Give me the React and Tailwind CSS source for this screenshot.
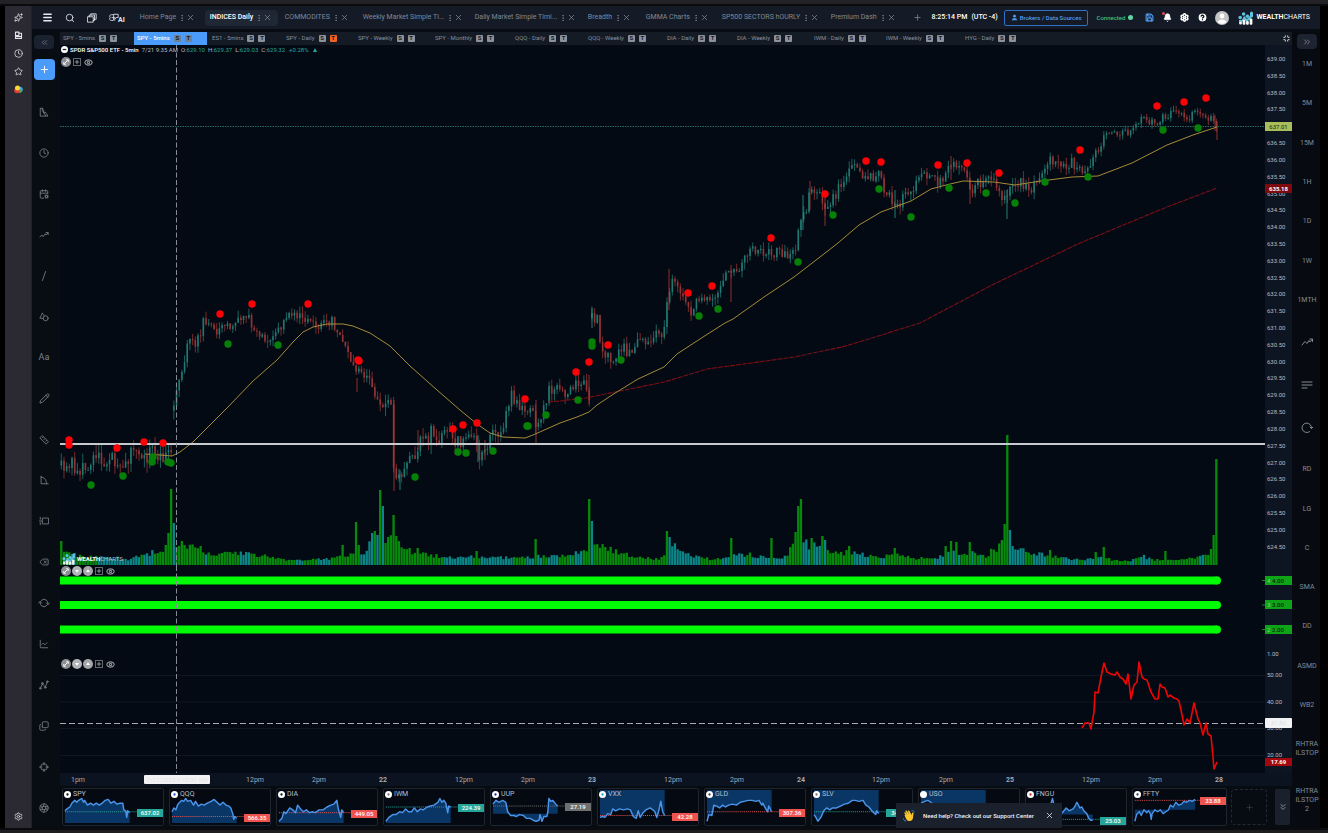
import {
  Aperture, Bell, CalendarCog, ChartLine, ChevronsDown, ChevronsLeft, ChevronsRight, CircleHelp, Clock, Copy,
  Delete, EllipsisVertical, Eye, Menu, Minimize, Pencil, Plus, RefreshCw, Save, Search, Settings,
  Sparkles, Star, User, X,
} from 'lucide-react';

const PAGE_TABS = [
  { name: 'Home Page', width: 'w-[70px]' },
  { name: 'INDICES Daily', width: 'w-[75px]', active: true },
  { name: 'COMMODITES', width: 'w-[78px]' },
  { name: 'Weekly Market Simple Ti...', width: 'w-[112px]' },
  { name: 'Daily Market Simple Timi...', width: 'w-[113px]' },
  { name: 'Breadth', width: 'w-[58px]' },
  { name: 'GMMA Charts', width: 'w-[76px]' },
  { name: 'SP500 SECTORS hOURLY', width: 'w-[109px]' },
  { name: 'Premium Dash', width: 'w-[87px]' },
];

const CHART_TABS = [
  { name: 'SPY - 5mins', width: 'w-[74px]' },
  { name: 'SPY - 5mins', width: 'w-[75px]', active: true },
  { name: 'ES1 - 5mins', width: 'w-[74px]' },
  { name: 'SPY - Daily', width: 'w-[72px]', alert: true },
  { name: 'SPY - Weekly', width: 'w-[77px]' },
  { name: 'SPY - Monthly', width: 'w-[80px]' },
  { name: 'QQQ - Daily', width: 'w-[73px]' },
  { name: 'QQQ - Weekly', width: 'w-[79px]' },
  { name: 'DIA - Daily', width: 'w-[70px]' },
  { name: 'DIA - Weekly', width: 'w-[77px]' },
  { name: 'IWM - Daily', width: 'w-[72px]' },
  { name: 'IWM - Weekly', width: 'w-[79px]' },
  { name: 'HYG - Daily', width: 'w-[75px]' },
];

// Close path of the 5 minute bars, as x / y pairs. One array for each run without a gap.
const PRICE_RUNS = [
  [[61, 468], [65, 475], [72, 457], [77, 477], [83, 463], [90, 468], [98, 450], [105, 463], [110, 455], [117, 465], [123, 460], [132, 453], [140, 457], [147, 458], [153, 448], [160, 457], [166, 458], [173, 443]],
  [[174, 398], [177, 390], [181, 380], [184, 360], [188, 345], [191, 335], [195, 343], [200, 340], [203, 320], [208, 328], [215, 332], [218, 333], [223, 328], [232, 325], [240, 315], [250, 320], [258, 330], [267, 340], [273, 332], [280, 328], [285, 318], [300, 315], [308, 320], [320, 324], [332, 322], [340, 330], [343, 345], [348, 347], [355, 375], [362, 373], [370, 383], [375, 403], [383, 405], [387, 393], [391, 407], [394, 477], [400, 473], [405, 462], [411, 463], [418, 443], [425, 445], [430, 433], [438, 438], [447, 435], [455, 440], [465, 438], [473, 433], [478, 453], [485, 447], [493, 433], [502, 432], [507, 413], [511, 393], [517, 403], [525, 415], [531, 408], [536, 423], [542, 415], [548, 392], [553, 390], [557, 382], [560, 387], [566, 393], [573, 387], [581, 380], [587, 390], [590, 400]],
  [[591, 313], [595, 323], [598, 320], [601, 347], [606, 358], [610, 357], [616, 360], [623, 343], [626, 357], [634, 350], [640, 338], [649, 347], [655, 335], [663, 342], [667, 307], [671, 287], [675, 280], [681, 293], [690, 312], [697, 300], [703, 298], [710, 298], [714, 305], [720, 288], [729, 270], [736, 277], [742, 262], [749, 250], [755, 253], [764, 250], [772, 255], [783, 252], [792, 258], [796, 247], [799, 227], [802, 207], [806, 213], [810, 190], [816, 193], [820, 190], [825, 213], [833, 200], [844, 178], [855, 168], [866, 180], [879, 175], [887, 195], [897, 208], [905, 197], [913, 197], [920, 168], [926, 177], [935, 182], [944, 182], [950, 167], [961, 168], [972, 188], [981, 182], [989, 175], [998, 187], [1007, 203], [1011, 187], [1022, 182], [1028, 192], [1037, 180], [1050, 162], [1061, 168], [1072, 162], [1080, 170], [1091, 163], [1098, 150], [1105, 133], [1119, 132], [1132, 133], [1140, 118], [1156, 123], [1165, 115], [1180, 113], [1187, 119], [1197, 112], [1206, 117], [1213, 118], [1218, 127]],
];

const LONG_WICKS = [
  [357, 378, 392], [394, 400, 491], [400, 470, 490], [418, 430, 450], [536, 400, 445], [478, 435, 462], [485, 440, 460],
  [589, 375, 404], [592, 308, 328], [669, 269, 310], [731, 265, 302], [803, 195, 230], [810, 181, 210], [825, 190, 226],
  [895, 190, 218], [951, 156, 180], [970, 180, 204], [1007, 190, 219], [1215, 115, 131], [1217, 121, 140],
];

const FAST_AVERAGE = '145,454 160,455 172,456 180,452 193,442 227,408 253,381 277,360 293,342 303,332 313,327 327,324 343,324 353,326 370,333 390,346 410,366 437,390 460,410 477,424 490,433 503,437 525,438 533,435 560,423 577,417 589,412 597,405 612,395 638,379 664,367 677,354 703,337 725,323 733,319 764,297 794,277 820,257 838,243 859,225 881,212 911,201 931,189 946,185 963,181 994,182 1015,185 1041,181 1072,177 1098,176 1132,163 1167,145 1193,135 1217,127';
const SLOW_AVERAGE = '548,402 560,401 586,398 625,390 664,382 707,369 751,363 794,357 842,347 872,338 907,327 920,323 994,284 1080,243 1167,207 1217,188';

const SELL_DOTS = [[69, 440], [69, 445], [117, 448], [144, 442], [163, 443], [220, 314], [252, 304], [308, 304], [358, 360], [359, 361], [453, 429], [463, 425], [477, 423], [525, 399], [576, 372], [589, 362], [608, 345], [688, 293], [712, 286], [771, 238], [825, 194], [866, 161], [881, 162], [938, 165], [967, 163], [999, 173], [1080, 150], [1157, 106], [1184, 102], [1206, 98]];
const BUY_DOTS = [[91, 485], [123, 476], [153, 457], [152, 462], [168, 462], [171, 463], [228, 344], [278, 345], [415, 477], [458, 452], [466, 453], [493, 451], [527, 426], [528, 426], [546, 415], [578, 400], [592, 342], [592, 346], [621, 360], [699, 316], [718, 309], [798, 262], [833, 215], [879, 189], [911, 217], [949, 188], [986, 193], [1015, 203], [1045, 182], [1088, 177], [1163, 130], [1198, 128]];

const VOLUME_ENVELOPE = [[61, 14], [70, 11], [90, 8], [120, 7], [130, 6], [150, 12], [165, 15], [177, 16], [190, 20], [200, 14], [215, 11], [237, 12], [260, 10], [278, 6], [300, 5], [330, 6], [340, 8], [365, 12], [372, 28], [389, 24], [397, 29], [405, 18], [418, 11], [430, 10], [450, 8], [477, 9], [490, 7], [510, 8], [545, 9], [560, 8], [575, 12], [588, 16], [597, 22], [610, 16], [625, 11], [640, 7], [660, 6], [673, 20], [685, 11], [700, 8], [715, 5], [729, 9], [750, 11], [765, 7], [785, 8], [794, 20], [804, 22], [818, 18], [830, 12], [848, 13], [870, 9], [880, 7], [895, 11], [915, 7], [935, 7], [950, 13], [970, 13], [985, 9], [1000, 20], [1014, 17], [1030, 12], [1050, 10], [1070, 6], [1085, 5], [1100, 9], [1112, 5], [1130, 4], [1141, 10], [1152, 5], [1175, 5], [1190, 7], [1205, 9], [1217, 13]];
const VOLUME_SPIKES = [[60, 24], [166, 20], [169, 32], [172, 76], [174, 42], [182, 24], [200, 19], [343, 20], [356, 43], [359, 20], [375, 34], [380, 75], [383, 59], [386, 22], [389, 28], [394, 50], [418, 17], [477, 14], [536, 26], [589, 66], [592, 44], [667, 34], [670, 28], [731, 27], [772, 27], [796, 33], [799, 59], [801, 66], [812, 27], [823, 29], [826, 25], [848, 19], [895, 17], [945, 19], [951, 24], [957, 23], [970, 23], [1002, 25], [1005, 41], [1007, 130], [1010, 35], [1050, 15], [1096, 13], [1104, 18], [1166, 14], [1212, 16], [1214, 30], [1217, 106]];
const LIGHT_SPIKES = [174, 383, 592, 670, 1010, 826];

const OSCILLATOR = '1082,728 1085,723 1089,723 1091,729 1094,712 1095,692 1098,693 1102,672 1104,663 1107,672 1111,674 1115,675 1117,672 1120,677 1123,679 1126,684 1128,674 1131,699 1134,685 1137,682 1139,662 1142,677 1144,679 1147,680 1151,692 1155,699 1158,699 1160,684 1162,687 1165,688 1168,697 1170,695 1174,698 1177,699 1179,701 1182,715 1184,725 1187,719 1190,723 1194,703 1198,719 1200,723 1203,735 1206,723 1208,734 1211,736 1213,757 1214,769 1217,762';

const TIMES = [
  [18, '1pm'], [177, '12pm'], [64, '2pm'], [64, '22'], [81, '12pm'], [64, '2pm'], [64, '23'], [81, '12pm'], [64, '2pm'],
  [64, '24'], [80, '12pm'], [65, '2pm'], [64, '25'], [81, '12pm'], [64, '2pm'], [64, '28'],
];

const TICKERS = [
  { name: 'SPY', price: '637.02', tone: 'up', line: 24, base: 36, mark: '#111', points: '2,23 4,21 7,19 9,15 12,12 14,14 16,12 19,10 21,14 22,12 25,17 28,15 31,17 34,15 37,17 40,15 43,12 46,11 49,15 52,13 55,16 58,15 61,15 62,22 64,23 65,30 66,23 68,25' },
  { name: 'QQQ', price: '566.35', tone: 'down', line: 29, base: 36, mark: '#1d4ed8', points: '2,24 4,20 6,22 8,16 12,12 14,13 16,10 18,13 21,12 24,17 26,13 29,18 32,16 35,17 38,15 42,13 45,11 48,14 51,17 54,14 57,17 60,18 62,20 64,26 65,32 66,29 68,31' },
  { name: 'DIA', price: '449.05', tone: 'down', line: 25, base: 36, mark: '#111', points: '2,34 5,31 7,24 9,26 13,20 16,22 19,25 21,17 24,21 27,24 30,22 33,25 36,24 39,25 43,22 47,22 51,19 55,17 58,16 61,12 62,18 63,23 65,30 66,22 68,25' },
  { name: 'IWM', price: '224.39', tone: 'up', line: 19, base: 36, mark: '#777', points: '2,34 5,30 9,27 12,27 16,24 19,25 22,21 25,24 28,24 31,20 34,24 37,21 40,22 44,19 47,18 51,17 55,14 57,10 59,14 61,12 63,15 65,25 66,18 68,19' },
  { name: 'UUP', price: '27.19', tone: 'flat', line: 18, base: 26, mark: '#1d1dc0', points: '2,16 5,12 8,14 12,12 15,14 17,24 20,28 23,28 26,29 29,27 33,28 36,31 40,31 43,33 46,34 49,33 50,27 52,34 54,29 57,29 58,24 59,10 61,13 63,12 66,16 68,18' },
  { name: 'VXX', price: '42.28', tone: 'down', line: 28, base: 1, mark: '#1aa5c8', points: '2,30 5,29 7,30 10,26 13,27 15,21 18,23 22,21 26,22 30,21 33,22 36,29 39,31 41,23 43,30 46,25 49,22 53,20 56,22 58,24 60,30 62,23 64,13 66,24 68,28' },
  { name: 'GLD', price: '307.36', tone: 'down', line: 24, base: 1, mark: '#444', points: '2,34 4,27 7,28 9,17 12,18 15,20 18,17 21,19 24,17 28,16 32,17 36,14 40,13 44,12 48,12 52,13 55,12 58,17 59,15 62,21 64,24 65,18 68,24' },
  { name: 'SLV', price: '34.64', tone: 'up', line: 24, base: 1, mark: '#777', points: '2,27 4,30 6,34 9,30 12,23 15,20 18,22 21,20 25,20 29,18 33,16 37,15 41,12 44,12 48,13 52,12 55,17 58,19 61,23 63,25 65,27 66,23 68,26' },
  { name: 'USO', tone: 'up', line: 27, base: 1, mark: '#fff', points: '2,15 6,13 9,12 12,14 15,17 20,20 26,18 32,21 38,23 44,20 50,24 56,26 62,25 68,27' },
  { name: 'FNGU', price: '25.03', tone: 'up', line: 32, base: 27, mark: '#c0262d', points: '2,30 8,24 14,26 20,21 25,17 27,10 29,19 33,22 37,25 41,20 44,23 48,21 50,18 52,14 55,20 57,19 59,23 62,26 64,31 66,33 68,33' },
  { name: 'FFTY', price: '33.88', tone: 'down', line: 12, base: 22, mark: '#345', points: '2,34 4,27 7,24 9,28 12,22 15,25 17,23 19,26 20,32 21,26 24,22 27,24 30,22 33,26 36,24 39,22 41,17 44,19 47,14 50,17 53,16 56,13 59,14 62,12 65,13 68,11' },
];

const TONES = {
  up: { tag: 'bg-[#26a69a]', stroke: '#26a69a' },
  down: { tag: 'bg-[#ef5350]', stroke: '#ef5350' },
  flat: { tag: 'bg-[#6f6f6f]', stroke: '#777777' },
};

const BAR_STEP = 2.68;

function makeRandom(seed) {
  let value = seed;
  return () => {
    value = (value * 16807) % 2147483647;
    return value / 2147483647;
  };
}

function valueAt(points, x) {
  for (let i = 1; i < points.length; i++) {
    if (x <= points[i][0]) {
      const [x0, y0] = points[i - 1];
      const [x1, y1] = points[i];
      return y0 + ((y1 - y0) * (x - x0)) / (x1 - x0);
    }
  }
  return points[points.length - 1][1];
}

function buildBars() {
  const random = makeRandom(4217);
  const bars = [];
  let last = null;
  for (let i = 0; i <= 431; i++) {
    const x = 61.3 + i * BAR_STEP;
    const runIndex = x < 173.5 ? 0 : x < 590.5 ? 1 : 2;
    const run = PRICE_RUNS[runIndex];
    const noise = x < 175 || (x > 385 && x < 500) ? 17 : x > 1100 ? 8 : 12;
    const close = valueAt(run, x) + (random() - 0.5) * noise;
    const open = last && last.runIndex === runIndex ? last.close : close + 5;
    bars.push({
      x,
      runIndex,
      open,
      close,
      high: Math.min(open, close) - random() * noise * 0.6,
      low: Math.max(open, close) + random() * noise * 0.6,
      volume: valueAt(VOLUME_ENVELOPE, x) * (0.75 + random() * 0.45),
      heavy: last && random() > 0.35 ? last.heavy : random() > 0.5,
    });
    last = bars[i];
  }
  VOLUME_SPIKES.forEach(([x, height]) => {
    const index = Math.max(0, Math.round((x - 61.3) / BAR_STEP));
    bars[index].volume = height;
    bars[index].heavy = !LIGHT_SPIKES.includes(x);
  });
  return bars;
}

const BARS = buildBars();

function LogoMark({ className }) {
  return (
    <svg viewBox="0 0 16 14" className={className} aria-hidden="true">
      <g fill="#5fc3e0">
        <circle cx="2.2" cy="6.6" r="1.8" />
        <circle cx="5.6" cy="3" r="1.8" />
        <circle cx="9.4" cy="5.2" r="1.8" />
        <rect x="12" y="0.5" width="3" height="6" rx="1.5" />
        <path d="M1 9h3l2-4 3 3 4-4v3l-4 4-3-3-2 3H1z" />
      </g>
      <g fill="#f4f6f8">
        <circle cx="2.5" cy="12" r="1.5" />
        <rect x="4.6" y="8.5" width="2.8" height="5.2" rx="1" />
        <rect x="8" y="10" width="2.8" height="3.7" rx="1" />
        <rect x="11.6" y="7.6" width="2.8" height="6.1" rx="1" />
      </g>
    </svg>
  );
}

function Glyph({ children, className = 'size-[10px]' }) {
  return (
    <svg viewBox="0 0 24 24" fill="none" stroke="currentColor" strokeWidth="2" strokeLinecap="round" strokeLinejoin="round" className={className} aria-hidden="true">
      {children}
    </svg>
  );
}

const TOOLS = [
  { label: 'Indicators', icon: <Glyph><path d="M3 21V3h5l3 5v6l4-2 6 9zM8 3v6l8 12" /></Glyph> },
  { label: 'History', icon: <Clock className="size-[10px]" /> },
  { label: 'Events', icon: <CalendarCog className="size-[10px]" /> },
  { label: 'Trend', icon: <Glyph><path d="M2 17l5-5 3 4 5-7 2 3 5-5M17 6h5v5" /></Glyph> },
  { label: 'Line', icon: <Glyph><path d="M8 23L16 1" /></Glyph> },
  { label: 'Shapes', icon: <Glyph><path d="M8 3L2 15h8M8 3l5 6" /><circle cx="16" cy="15" r="6" /></Glyph> },
  { label: 'Text', icon: <span className="text-[9px] leading-none">Aa</span> },
  { label: 'Draw', icon: <Pencil className="size-[11px]" /> },
  { label: 'Measure', icon: <Glyph><path d="M7 2L2 7l15 15 5-5zM10 5L8 7M14 9l-2 2M18 13l-2 2" /></Glyph> },
  { label: 'Angle', icon: <Glyph><path d="M5 3v18h17M5 5c8 0 13 7 13 16" /></Glyph> },
  { label: 'Range', icon: <Glyph><rect x="9" y="5" width="14" height="14" /><path d="M3 3v5M3 16v5M1 12h5" /></Glyph> },
  { label: 'Clear', icon: <Delete className="size-[10px]" /> },
  { label: 'Sync', icon: <RefreshCw className="size-[10px] rotate-45" /> },
  { label: 'Chart type', icon: <ChartLine className="size-[10px]" /> },
  { label: 'Pattern', icon: <Glyph><path d="M4 19l4-10 7 8 5-12" /><circle cx="3" cy="20" r="2" /><circle cx="8" cy="8" r="2" /><circle cx="15" cy="18" r="2" /><circle cx="20" cy="4" r="2" /></Glyph> },
  { label: 'Duplicate', icon: <Copy className="size-[10px] -rotate-90" /> },
  { label: 'Crosshair', icon: <Glyph><circle cx="12" cy="12" r="8" /><path d="M12 1v6M12 17v6M1 12h6M17 12h6" /></Glyph> },
  { label: 'Snapshot', icon: <Aperture className="size-[10px]" /> },
];

const SHORTCUTS = [
  { label: '1M', size: 'grow-39' },
  { label: '5M', size: 'grow-39' },
  { label: '15M', size: 'grow-39' },
  { label: '1H', size: 'grow-39' },
  { label: '1D', size: 'grow-39' },
  { label: '1W', size: 'grow-39' },
  { label: '1MTH', size: 'grow-39' },
  { label: 'Trend', size: 'grow-43', icon: <Glyph className="size-[12px]"><path d="M2 18l6-7 4 4 4-6 2 3 5-6M18 6h5v5" /></Glyph> },
  { label: 'List', size: 'grow-43', icon: <Glyph className="size-[12px]"><path d="M2 6h20M2 12h20M2 18h10" /></Glyph> },
  { label: 'Reload', size: 'grow-43', icon: <Glyph className="size-[12px]"><path d="M21 13a9.500 9.500 0 10-4 6.500M18 10l3 3 3-3" /></Glyph> },
  { label: 'RD', size: 'grow-39' },
  { label: 'LG', size: 'grow-39' },
  { label: 'C', size: 'grow-39' },
  { label: 'SMA', size: 'grow-39' },
  { label: 'DD', size: 'grow-39' },
  { label: 'ASMD', size: 'grow-39' },
  { label: 'WB2', size: 'grow-39' },
  { label: 'RHTRAILSTOP', lines: ['RHTRA', 'ILSTOP'], size: 'grow-48' },
  { label: 'RHTRAILSTOP 2', lines: ['RHTRA', 'ILSTOP', '2'], size: 'grow-54' },
];

function BrowserRail() {
  return (
    <nav aria-label="Browser" className="flex w-[27px] shrink-0 flex-col items-center justify-between border-r border-[#1c2130] bg-[#2b2a33] py-[7px] text-[#e4e4ea]">
      <div className="flex flex-col items-center gap-[9px]">
        <button aria-label="Assistant"><Sparkles className="size-[9px]" /></button>
        <button aria-label="Synced tabs">
          <Glyph className="size-[9px]"><path d="M4 3h9v9H4zM13 6h7v14H4v-5M4 15h16" strokeWidth="3" /></Glyph>
        </button>
        <button aria-label="History"><Clock className="size-[9px]" /></button>
        <button aria-label="Bookmarks"><Star className="size-[9px]" /></button>
        <button aria-label="Extension">
          <svg viewBox="0 0 18 18" className="size-[9px]">
            <circle cx="12" cy="9" r="5.5" fill="#3fa7e8" />
            <circle cx="11" cy="12" r="4" fill="#4caf50" />
            <circle cx="6" cy="11" r="5.5" fill="#e53935" />
            <circle cx="7" cy="6" r="5" fill="#fdd835" />
          </svg>
        </button>
      </div>
      <button aria-label="Sidebar settings"><Settings className="size-[9px]" /></button>
    </nav>
  );
}

function Header() {
  return (
    <header className="flex h-[23px] shrink-0 items-center bg-[#141b26] pl-[10px] pr-[10px] text-[7px] text-[#7f8a9a]">
      <div className="flex shrink-0 items-center gap-3 text-[#e6eaf0]">
        <button aria-label="Menu"><Menu className="size-[11px]" strokeWidth={3} /></button>
        <button aria-label="Search"><Search className="size-[10px]" /></button>
        <button aria-label="Layouts">
          <Glyph className="size-[10px]"><path d="M2 9h13v13H2zM5 9V5h13v13h-3M9 5V2h13v13h-4" /></Glyph>
        </button>
        <button aria-label="AI" className="flex items-end">
          <Glyph className="size-[10px]"><path d="M9 4H6a4 4 0 00-3 7 4 4 0 003 7h3M12 3h10v8h-5l-3 4v-4h-2zM7 11h4v6h3" /></Glyph>
          <span className="-mb-px -ml-px text-[7px] font-bold leading-[7px]">AI</span>
        </button>
      </div>

      <div className="ml-[10px] flex items-center">
        {PAGE_TABS.map((tab) => (
          <div key={tab.name} className={`${tab.width} shrink-0`}>
            <div className={`flex h-4 w-fit items-center rounded-sm pl-[5px] pr-[6px] ${tab.active ? 'bg-[#1f2735]' : ''}`}>
              <a href="#" className={`whitespace-nowrap ${tab.active ? 'font-medium text-white' : ''}`}>{tab.name}</a>
              <button aria-label={`${tab.name} options`} className="ml-[2px]"><EllipsisVertical className="size-[8px]" /></button>
              <button aria-label={`Close ${tab.name}`}><X className="size-[9px]" /></button>
            </div>
          </div>
        ))}
        <button aria-label="Add tab" className="shrink-0"><Plus className="size-[9px]" /></button>
      </div>

      <div className="ml-auto flex shrink-0 items-center whitespace-nowrap">
        <span className="font-medium text-white">8:25:14 PM</span>
        <span className="ml-1 font-medium text-white">(UTC -4)</span>
        <button className="ml-[6px] flex h-4 items-center gap-[2px] rounded-[2px] border border-[#2f6fc4] px-[6px] text-[6px] font-medium text-[#4f9cf5]">
          <User className="size-[7px]" fill="currentColor" />
          Brokers / Data Sources
        </button>
        <span className="ml-2 text-[6px] font-medium text-[#3fbf7f]">Connected</span>
        <span className="ml-[3px] size-[5px] rounded-full bg-[#5fd8a0]" />
        <button aria-label="Save" className="ml-[12px] text-[#4f9cf5]"><Save className="size-[9px]" strokeWidth={3} /></button>
        <button aria-label="Notifications" className="relative ml-[9px] text-white">
          <Bell className="size-[9px]" fill="currentColor" />
          <span className="absolute -left-px -top-px size-[3px] rounded-full bg-[#e5484d]" />
        </button>
        <button aria-label="Settings" className="ml-[8px] text-white"><Settings className="size-[9px]" strokeWidth={4} /></button>
        <button aria-label="Help" className="ml-[8px]"><CircleHelp className="size-[11px] text-[#141b26]" fill="white" strokeWidth={3} /></button>
        <button aria-label="Account" className="ml-[7px]">
          <svg viewBox="0 0 14 14" className="size-[14px]">
            <circle cx="7" cy="7" r="7" fill="#c4c4c4" />
            <circle cx="7" cy="5" r="2.4" fill="#fff" />
            <path d="M2.6 11a4.6 3.6 0 018.8 0 6 6 0 01-8.8 0z" fill="#fff" />
          </svg>
        </button>
        <a href="#" className="ml-[9px] flex items-center gap-[2px] text-[7px] leading-none text-white">
          <LogoMark className="h-[14px] w-4" />
          <span><b>WEALTH</b>CHARTS</span>
        </a>
      </div>
    </header>
  );
}

function ToolRail() {
  return (
    <aside className="flex w-7 shrink-0 flex-col bg-[#080c13] pl-[2px] text-[#7c828c]">
      <button aria-label="Collapse tools" className="mt-[3px] flex h-[14px] w-5 items-center justify-center rounded-sm bg-[#1a2230]">
        <ChevronsLeft className="size-[9px]" />
      </button>
      <button aria-label="Add chart" className="mb-3 mt-[10px] flex h-[21px] w-[21px] items-center justify-center rounded-sm bg-[#4a9bfa] text-white">
        <Plus className="size-[11px]" />
      </button>
      {TOOLS.map((tool) => (
        <button key={tool.label} aria-label={tool.label} className="flex w-5 flex-1 items-center justify-center">
          {tool.icon}
        </button>
      ))}
    </aside>
  );
}

function ShortcutRail() {
  return (
    <aside className="flex w-7 shrink-0 flex-col items-center bg-[#070b11] pl-[2px] text-[7px] leading-[9px] text-[#858a93]">
      <button aria-label="Expand panel" className="-mb-1 mt-[2px] flex h-[15px] w-5 shrink-0 items-center justify-center rounded-sm bg-[#1d2330]">
        <ChevronsRight className="size-[10px]" />
      </button>
      {SHORTCUTS.map((item) => (
        <button key={item.label} aria-label={item.label} className={`${item.size} flex basis-0 flex-col items-center justify-center`}>
          {item.icon || (item.lines || [item.label]).map((line) => <span key={line}>{line}</span>)}
        </button>
      ))}
    </aside>
  );
}

function ChartTabs() {
  return (
    <div className="flex h-[13px] shrink-0 items-center bg-[#141b25] text-[6px] leading-none text-[#858f9d]">
      {CHART_TABS.map((tab, index) => (
        <div key={index} className={`${tab.width} h-full shrink-0`}>
          <button className={`flex h-full w-[73px] items-center whitespace-nowrap pb-px pl-[3px] ${tab.active ? 'bg-[#4a9bfa] font-medium text-white' : ''}`}>
            {tab.name}
            <span className={`ml-1 flex size-[7px] items-center justify-center rounded-[1px] font-bold text-[#141b25] ${tab.active ? 'bg-[#6d8299]' : 'bg-[#8c929c]'}`}>S</span>
            <span className={`ml-1 flex size-[7px] items-center justify-center rounded-[1px] font-bold text-[#141b25] ${tab.alert ? 'bg-[#f26322]' : tab.active ? 'bg-[#6d8299]' : 'bg-[#8c929c]'}`}>T</span>
          </button>
        </div>
      ))}
      <button aria-label="Minimize" className="ml-auto mr-[2px] text-white"><Minimize className="size-[7px]" strokeWidth={3} /></button>
    </div>
  );
}

function PaneControls({ movable = false, className }) {
  return (
    <div className={`absolute left-[1px] flex items-center text-[#8d8f93] ${className}`}>
      <button aria-label="Expand pane">
        <svg viewBox="0 0 10 10" className="size-[10px]"><circle cx="5" cy="5" r="5" fill="#8d8f93" /><path d="M5.200 2.800h2v2M4.800 7.200h-2v-2M3.500 6.500l3-3" stroke="#fff" fill="none" /></svg>
      </button>
      {movable && (
        <>
          <button aria-label="Move down" className="ml-px">
            <svg viewBox="0 0 10 10" className="size-[10px]"><circle cx="5" cy="5" r="5" fill="#b4b5b8" /><path d="M3 4h4L5 6.800z" fill="#fff" /></svg>
          </button>
          <button aria-label="Move up" className="ml-px">
            <svg viewBox="0 0 10 10" className="size-[10px]"><circle cx="5" cy="5" r="5" fill="#a5a6a9" /><path d="M3 6h4L5 3.200z" fill="#fff" /></svg>
          </button>
        </>
      )}
      <button aria-label="Add" className="ml-[2px] flex size-2 items-center justify-center border border-[#64676d]"><Plus className="size-[6px]" strokeWidth={4} /></button>
      <button aria-label="Show or hide" className="ml-[3px]"><Eye className="size-[9px]" strokeWidth={3} /></button>
    </div>
  );
}

function PriceChart() {
  return (
    <svg viewBox="60 45 1205 521" preserveAspectRatio="none" className="absolute inset-0 h-full w-full" role="img" aria-label="SPY 5 minute price and volume">
      {BARS.map((bar) => (
        <rect key={bar.x} x={bar.x - 1.2} y={565 - bar.volume} width="2.3" height={bar.volume} fill={bar.heavy ? '#078a0b' : '#0b8587'} />
      ))}
      {BARS.map((bar) => {
        const color = bar.close <= bar.open ? '#2a9d91' : '#c2413f';
        const top = Math.min(bar.open, bar.close);
        return (
          <g key={bar.x} opacity="0.75">
            <line x1={bar.x} x2={bar.x} y1={bar.high} y2={bar.low} stroke={color} strokeWidth="0.8" />
            <rect x={bar.x - 0.8} y={top} width="1.6" height={Math.max(1, Math.abs(bar.open - bar.close))} fill={color} />
          </g>
        );
      })}
      {LONG_WICKS.map(([x, top, bottom], index) => (
        <line key={x} x1={x} x2={x} y1={top} y2={bottom} stroke={index % 3 === 2 ? '#2a9d91' : '#b03a3a'} strokeWidth="0.8" />
      ))}
      <line x1="60" x2="1265" y1="126.500" y2="126.500" stroke="#2b6863" strokeDasharray="1.500 1" />
      <polyline points={SLOW_AVERAGE} fill="none" stroke="#7a1018" strokeWidth="1.100" strokeDasharray="5 1" />
      <polyline points={FAST_AVERAGE} fill="none" stroke="#a58a38" strokeWidth="1" />
      <line x1="60" x2="1265" y1="444" y2="444" stroke="#c6c9cd" strokeWidth="2" />
      <line x1="176.500" x2="176.500" y1="45" y2="566" stroke="#868b93" strokeDasharray="5 2.500" />
      {BUY_DOTS.map(([x, y]) => <circle key={`${x}-${y}`} cx={x} cy={y} r="3.700" fill="#078007" />)}
      {SELL_DOTS.map(([x, y]) => <circle key={`${x}-${y}`} cx={x} cy={y} r="3.700" fill="#fb0207" />)}
    </svg>
  );
}

function PricePane() {
  const prices = Array.from({ length: 30 }, (_, i) => (639 - i * 0.5).toFixed(2));
  return (
    <section className="flex min-h-0 grow-521 basis-0">
      <div className="relative min-w-0 flex-1">
        <PriceChart />
        <div className="absolute left-[1px] top-0 flex items-center whitespace-nowrap text-[6px] leading-[9px] text-[#b4bac2]">
          <svg viewBox="0 0 8 8" className="mr-[2px] size-[7px]"><circle cx="4" cy="4" r="4" fill="#fff" /><path d="M2 4h4" stroke="#222" strokeWidth="1.500" /></svg>
          <span className="font-medium text-white">SPDR S&amp;P500 ETF - 5min</span>
          <span className="ml-[3px]">7/21 9:35 AM</span>
          <span className="ml-[3px]">O:<span className="text-[#26a69a]">629.10</span></span>
          <span className="ml-[3px]">H:<span className="text-[#26a69a]">629.37</span></span>
          <span className="ml-[3px]">L:<span className="text-[#26a69a]">629.03</span></span>
          <span className="ml-[3px]">C:<span className="text-[#26a69a]">629.32</span></span>
          <span className="ml-1 text-[#26a69a]">+0.28%</span>
          <svg viewBox="0 0 6 6" className="ml-1 size-[4px]"><path d="M0 6h6L3 0z" fill="#26a69a" /></svg>
        </div>
        <PaneControls className="top-3" />
        <div className="absolute bottom-[1px] left-[2px] flex items-center gap-px text-[6px] leading-none text-white">
          <LogoMark className="h-3 w-[14px]" />
          <span><b>WEALTH</b><span className="text-[#b9bec5]">CHARTS</span></span>
        </div>
      </div>
      <div className="relative flex w-[27px] flex-col justify-between bg-[#0d1522] pb-[15px] pl-[2px] pt-[9px] text-[6px] leading-[9px] text-[#b4bcc8]">
        {prices.map((price) => <span key={price}>{price}</span>)}
        <span className="absolute inset-x-0 top-[77px] h-[9px] bg-[#a9bd5a] text-center text-[#20260c]">637.01</span>
        <span className="absolute inset-x-0 top-[139px] h-[9px] bg-[#7d0a0f] text-center font-bold text-white">635.18</span>
      </div>
    </section>
  );
}

function TrendPane() {
  return (
    <section className="flex min-h-0 grow-93 basis-0">
      <div className="relative min-w-0 flex-1">
        <svg viewBox="60 566 1205 93" preserveAspectRatio="none" className="absolute inset-0 h-full w-full" role="img" aria-label="Trend bars">
          {[580.5, 605, 629.5].map((y) => (
            <g key={y}>
              <line x1="60" x2="1217" y1={y} y2={y} stroke="#00fb04" strokeWidth="8" />
              <circle cx="1217" cy={y} r="4" fill="#00fb04" />
              <line x1="1262" x2="1265" y1={y} y2={y} stroke="#0c8f16" />
            </g>
          ))}
          <line x1="176.500" x2="176.500" y1="566" y2="659" stroke="#868b93" strokeDasharray="5 2.500" />
        </svg>
        <PaneControls movable className="top-0" />
      </div>
      <div className="flex w-[27px] flex-col justify-between bg-[#0d1522] pb-px pt-[10px] text-[6px] leading-[9px] text-[#b4bcc8]">
        {['4.00', '3.00', '2.00'].map((value) => (
          <span key={value} className="flex bg-[#0fa317] pl-[2px]">
            <span className="w-[5px] overflow-hidden text-[#7fd683]">{value[0]}</span>
            <span className="font-medium text-[#062a08]">{value}</span>
          </span>
        ))}
        <span className="pl-[2px]">1.00</span>
      </div>
    </section>
  );
}

function OscillatorPane() {
  return (
    <section className="flex min-h-0 grow-114 basis-0">
      <div className="relative min-w-0 flex-1">
        <svg viewBox="60 659 1205 114" preserveAspectRatio="none" className="absolute inset-0 h-full w-full" role="img" aria-label="Oscillator">
          {[675.5, 702, 728.5, 755.5].map((y) => <line key={y} x1="60" x2="1265" y1={y} y2={y} stroke="#0f1620" />)}
          <line x1="60" x2="1265" y1="723.500" y2="723.500" stroke="#a7abb2" strokeDasharray="6 3" />
          <line x1="176.500" x2="176.500" y1="659" y2="773" stroke="#868b93" strokeDasharray="5 2.500" />
          <polyline points={OSCILLATOR} fill="none" stroke="#f00505" strokeWidth="1.600" strokeLinejoin="round" />
        </svg>
        <PaneControls movable className="top-0" />
      </div>
      <div className="relative flex w-[27px] flex-col justify-between bg-[#0d1522] pb-[14px] pl-[2px] pt-[11px] text-[6px] leading-[9px] text-[#b4bcc8]">
        {['50.00', '40.00', '30.00', '20.00'].map((value) => <span key={value}>{value}</span>)}
        <span className="absolute inset-x-0 top-[59px] h-[10px] rounded-[1px] bg-[#f2f2f4] text-center leading-[10px] text-[#dcdce0]">31.82</span>
        <span className="absolute inset-x-0 top-[99px] h-2 bg-[#a3080e] text-center font-bold leading-2 text-white">17.69</span>
      </div>
    </section>
  );
}

function TimeAxis() {
  return (
    <div className="relative flex h-[13px] shrink-0 items-center bg-[#0c1320] pr-[73px] pt-px text-[7px] leading-none text-[#a2aab5]">
      {TIMES.map(([gap, label], index) => (
        <div key={index} className="flex basis-0 justify-end" style={{ flexGrow: gap }}>
          <span className={`flex w-0 justify-center whitespace-nowrap ${label.length === 2 ? 'font-bold' : ''}`}>{label}</span>
        </div>
      ))}
      <span className="absolute left-[84px] top-[2px] h-[9px] w-[66px] whitespace-nowrap rounded-[1px] bg-[#f2f2f4] text-center text-[6px] leading-[9px] text-[#e3e3e6]">7/21/2025 9:35:00 AM</span>
    </div>
  );
}

function TickerCard({ ticker }) {
  const tone = TONES[ticker.tone];
  return (
    <a href="#" className="relative block h-[38px] w-[102px] shrink-0 rounded-[2px] border border-[#1e252f] bg-[#050a12] text-[7px] last:shrink">
      <svg viewBox="0 0 102 38" preserveAspectRatio="none" className="absolute inset-0 h-full w-full" aria-hidden="true">
        <polygon points={`2,${ticker.base} ${ticker.points} 68,${ticker.base}`} fill="#0a3665" />
        <line x1="2" x2="76" y1={ticker.line} y2={ticker.line} stroke={tone.stroke} strokeDasharray="1 1" />
        <polyline points={ticker.points} fill="none" stroke="#4a94ea" strokeWidth="1.500" strokeLinejoin="round" />
      </svg>
      <span className="relative flex items-center gap-[2px] pl-px pt-px leading-[9px] text-[#b6bdc7]">
        <svg viewBox="0 0 8 8" className="size-[7px]"><circle cx="4" cy="4" r="4" fill="#fff" /><circle cx="4" cy="4" r="1.300" fill={ticker.mark} /></svg>
        {ticker.name}
      </span>
      {ticker.price && (
        <span className={`absolute right-0 flex h-2 w-[26px] items-center justify-center text-[6px] font-medium leading-none text-white ${tone.tag}`} style={{ top: ticker.line - 4 }}>
          {ticker.price}
        </span>
      )}
    </a>
  );
}

function SupportToast() {
  return (
    <div role="status" className="absolute bottom-0 right-[230px] flex h-[25px] w-[166px] items-center bg-[#1b212c] pl-[7px] text-[6px] font-medium text-[#f0f2f5]">
      <svg viewBox="0 0 24 24" className="size-3 shrink-0" aria-hidden="true">
        <path d="M5 10L3 7c-1-2 1-3 2-2l4 5-4-7c-1-2 2-3 3-1l4 6-2-5c-1-2 2-3 3-1l4 8 1-4c1-2 4-1 3 1l-1 8c0 5-4 8-8 7-4 0-6-4-9-12z" fill="#fcc62d" />
        <path d="M1 17c0 3 2 5 5 5M17 1c3 0 5 2 6 4" stroke="#3b88c9" strokeWidth="2" fill="none" />
      </svg>
      <a href="#" className="ml-2 whitespace-nowrap">Need help? Check out our Support Center</a>
      <button aria-label="Dismiss" className="ml-auto mr-2"><X className="size-[9px]" /></button>
    </div>
  );
}

function Watchlist() {
  return (
    <div className="relative flex h-[42px] shrink-0 items-center bg-[#070b12]">
      <div className="flex min-w-0 flex-1 gap-[5px] overflow-hidden pl-[2px]">
        {TICKERS.map((ticker) => <TickerCard key={ticker.name} ticker={ticker} />)}
      </div>
      <button aria-label="Add symbol" className="ml-1 flex h-9 w-9 items-center justify-center rounded-sm border border-dashed border-[#232831] text-[#343a44]">
        <Plus className="size-[9px]" />
      </button>
      <button aria-label="More symbols" className="ml-2 mr-[2px] flex h-9 w-[15px] items-center justify-center rounded-[2px] bg-[#1a212d] text-[#9aa3b0]">
        <ChevronsDown className="size-[10px]" />
      </button>
      <SupportToast />
    </div>
  );
}

export default function App() {
  return (
    <div className="flex h-screen flex-col bg-black font-[Roboto,sans-serif]">
      <div className="h-[6px] shrink-0 border-b-2 border-[#0b0b0d] bg-[#232327]" />
      <div className="flex min-h-0 flex-1 pl-[5px] pr-2">
        <BrowserRail />
        <div className="flex min-w-0 flex-1 flex-col bg-[#070b12]">
          <Header />
          <div className="flex min-h-0 flex-1 pt-[3px]">
            <ToolRail />
            <main className="flex min-w-0 flex-1 flex-col bg-[#040a13]">
              <ChartTabs />
              <PricePane />
              <TrendPane />
              <OscillatorPane />
              <TimeAxis />
              <Watchlist />
            </main>
            <ShortcutRail />
          </div>
        </div>
      </div>
      <div className="h-[5px] shrink-0 border-t-2 border-[#0b0b0d] bg-[#1d1c21]" />
    </div>
  );
}
